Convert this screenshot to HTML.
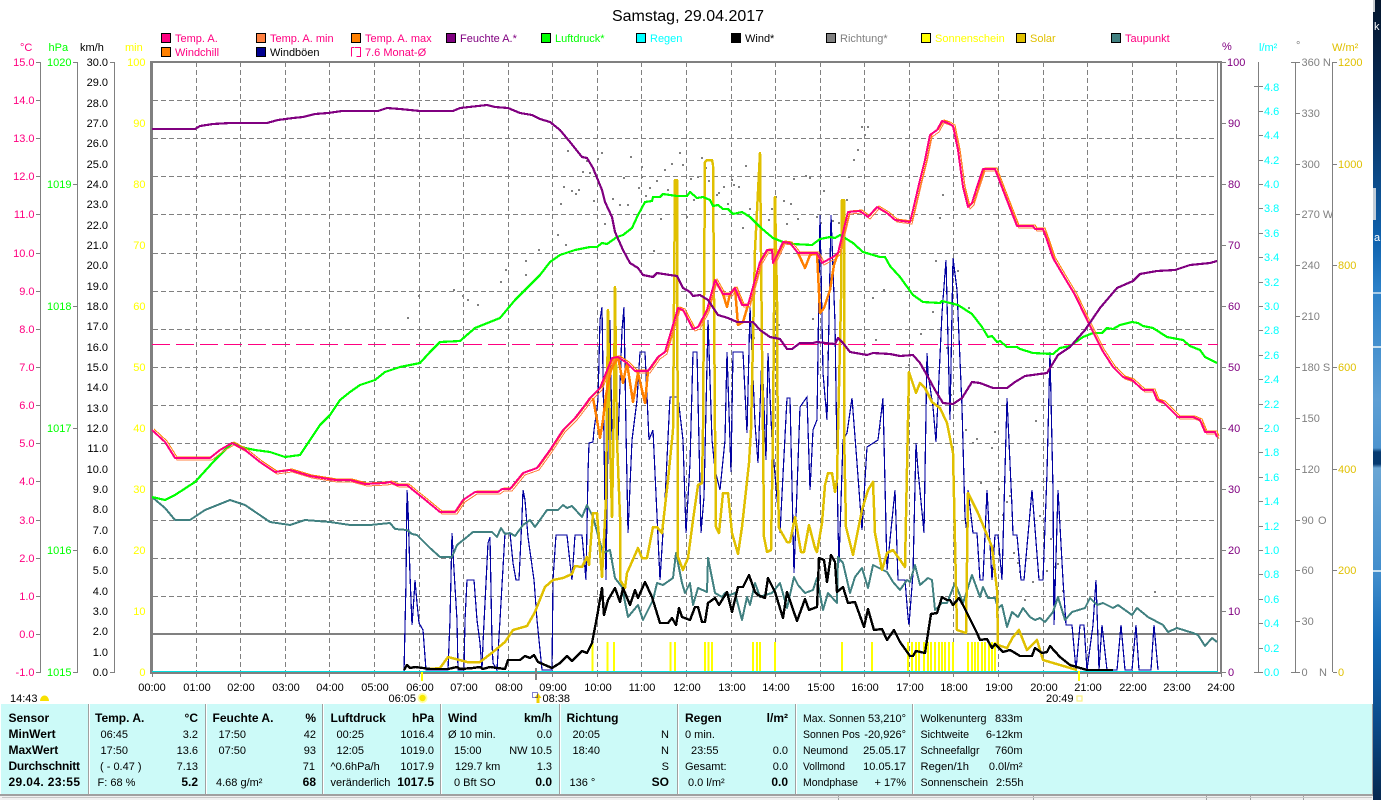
<!DOCTYPE html>
<html><head><meta charset="utf-8"><title>Samstag, 29.04.2017</title>
<style>
html,body{margin:0;padding:0;background:#fff;overflow:hidden}
svg{display:block;position:absolute;left:0;top:0}
text{font-family:"Liberation Sans",sans-serif;font-size:11px}
.b{font-weight:bold;font-size:12px}
.p text{fill:#000}
polyline,use{shape-rendering:crispEdges}
</style></head><body>
<svg width="1381" height="800" viewBox="0 0 1381 800" xmlns="http://www.w3.org/2000/svg">
<defs>
<linearGradient id="desk" x1="0" y1="0" x2="0" y2="1">
<stop offset="0" stop-color="#04152c"/><stop offset=".12" stop-color="#072a55"/><stop offset=".3" stop-color="#0f62ae"/><stop offset=".36" stop-color="#2a80c8"/><stop offset=".5" stop-color="#5e9fd4"/><stop offset=".56" stop-color="#4d94cf"/><stop offset=".565" stop-color="#063a70"/><stop offset=".58" stop-color="#063a70"/><stop offset=".585" stop-color="#6aa6d4"/><stop offset=".72" stop-color="#3f8ccc"/><stop offset=".8" stop-color="#136ab6"/><stop offset=".9" stop-color="#0a4c8c"/><stop offset="1" stop-color="#06284f"/>
</linearGradient>
<polyline id="temp" fill="none" stroke-linejoin="round" points="152,430 165,442 175,458 210,458 220,450 232,443 245,450 260,462 275,472 290,470 310,476 335,480 350,480 365,484 385,483 390,482 397,485 407,485 413,490 423,498 440,512 455,512 463,500 475,492 498,492 502,489 510,489 523,473 537,468 550,450 563,430 575,418 585,405 590,398 600,388 612,358 618,357 627,363 635,371 648,371 658,357 665,352 678,308 683,310 693,329 698,327 707,310 715,280 723,294 730,294 735,288 742,305 748,305 760,262 767,250 772,250 773,263 778,253 783,242 790,243 798,253 817,253 822,263 833,257 838,253 848,212 860,211 868,217 877,207 887,213 895,220 910,222 913,210 920,180 925,160 930,135 937,130 942,121 948,123 953,126 958,150 963,187 968,207 972,203 977,187 983,169 995,169 1003,190 1017,226 1033,226 1035,229 1043,229 1047,240 1053,258 1063,275 1075,295 1087,320 1102,350 1113,367 1123,377 1132,380 1143,390 1153,390 1157,400 1163,402 1178,417 1193,417 1200,420 1205,432 1215,432 1217,437"/>
</defs>
<rect width="1381" height="800" fill="#fff"/>

<text x="688" y="21" text-anchor="middle" style="font-size:16px" fill="#000">Samstag, 29.04.2017</text>

<!-- legend -->
<g stroke="#000" stroke-width="1" shape-rendering="crispEdges">
<rect x="161.500" y="33.500" width="9" height="9" fill="#ff0080"/>
<rect x="256.500" y="33.500" width="9" height="9" fill="#ff8040"/>
<rect x="351.500" y="33.500" width="9" height="9" fill="#ff8000"/>
<rect x="446.500" y="33.500" width="9" height="9" fill="#800080"/>
<rect x="541.500" y="33.500" width="9" height="9" fill="#00ff00"/>
<rect x="636.500" y="33.500" width="9" height="9" fill="#00ffff"/>
<rect x="731.500" y="33.500" width="9" height="9" fill="#000"/>
<rect x="826.500" y="33.500" width="9" height="9" fill="#808080"/>
<rect x="921.500" y="33.500" width="9" height="9" fill="#ffff00"/>
<rect x="1016.500" y="33.500" width="9" height="9" fill="#e0c000"/>
<rect x="1111.500" y="33.500" width="9" height="9" fill="#408080"/>
<rect x="161.500" y="47.500" width="9" height="9" fill="#ff8000"/>
<rect x="256.500" y="47.500" width="9" height="9" fill="#000090"/>
<path d="M355 47.500h5.500v9h-4M351.500 47.500h3M351.500 47.500v9" fill="none" stroke="#ff0080"/>
</g>
<g>
<text x="175" y="42" fill="#ff0080">Temp. A.</text>
<text x="270" y="42" fill="#ff0080">Temp. A. min</text>
<text x="365" y="42" fill="#ff0080">Temp. A. max</text>
<text x="460" y="42" fill="#800080">Feuchte A.*</text>
<text x="555" y="42" fill="#00ff00">Luftdruck*</text>
<text x="650" y="42" fill="#00ffff">Regen</text>
<text x="745" y="42" fill="#000">Wind*</text>
<text x="840" y="42" fill="#808080">Richtung*</text>
<text x="935" y="42" fill="#ffff00">Sonnenschein</text>
<text x="1030" y="42" fill="#e0c000">Solar</text>
<text x="1125" y="42" fill="#ff0080">Taupunkt</text>
<text x="175" y="56" fill="#ff0080">Windchill</text>
<text x="270" y="56" fill="#000">Windböen</text>
<text x="365" y="56" fill="#ff0080">7.6 Monat-Ø</text>
</g>

<!-- axis headings -->
<text x="20" y="51" fill="#ff0080">°C</text>
<text x="48.500" y="51" fill="#00ff00">hPa</text>
<text x="80" y="51" fill="#000">km/h</text>
<text x="125" y="51" fill="#ffff00">min</text>
<text x="1222" y="50" fill="#800080">%</text>
<text x="1259" y="51" fill="#00ffff">l/m²</text>
<text x="1296" y="49" fill="#808080">°</text>
<text x="1332" y="51" fill="#e0c000">W/m²</text>

<!-- grid -->
<g shape-rendering="crispEdges" fill="none">
<path stroke="#808080" stroke-dasharray="5 3" d="M196.500 62V672M240.500 62V672M285.500 62V672M329.500 62V672M374.500 62V672M419.500 62V672M463.500 62V672M508.500 62V672M552.500 62V672M597.500 62V672M641.500 62V672M686.500 62V672M731.500 62V672M775.500 62V672M820.500 62V672M864.500 62V672M909.500 62V672M953.500 62V672M998.500 62V672M1043.500 62V672M1087.500 62V672M1132.500 62V672M1176.500 62V672"/>
<path stroke="#808080" stroke-dasharray="5 3" d="M153 100.500H1218M153 138.500H1218M153 176.500H1218M153 214.500H1218M153 253.500H1218M153 291.500H1218M153 329.500H1218M153 367.500H1218M153 405.500H1218M153 443.500H1218M153 481.500H1218M153 520.500H1218M153 558.500H1218M153 596.500H1218"/>
<rect x="152" y="633" width="1066" height="2" fill="#808080"/>
<rect x="150" y="61" width="1072" height="2" fill="#808080"/>
<rect x="150" y="61" width="3" height="612" fill="#808080"/>
<rect x="1217" y="62" width="1" height="611" fill="#808080"/>
<rect x="1220" y="61" width="2" height="612" fill="#808080"/>
</g>

<!-- direction dots -->
<path fill="none" stroke="#808080" stroke-width="2" shape-rendering="crispEdges" d="M567 151h2M601 153h2M630 157h2M679 153h2M671 164h2M682 165h2M701 158h2M745 166h2M861 127h2M867 127h2M864 135h2M857 150h2M853 160h2M586 161h2M597 159h2M582 172h2M589 173h2M641 167h2M664 170h2M623 178h2M641 177h2M690 179h2M697 177h2M705 168h2M712 176h2M708 181h2M656 181h2M638 188h2M649 188h2M563 187h2M571 191h2M575 194h2M578 190h2M645 196h2M667 190h2M718 193h2M723 187h2M716 195h2M731 180h2M733 185h2M738 187h2M793 179h2M805 176h2M809 178h2M848 177h2M823 191h2M846 200h2M775 197h2M783 201h2M790 204h2M693 200h2M560 204h2M593 201h2M612 199h2M619 205h2M627 205h2M727 204h2M701 197h2M771 209h2M749 209h2M604 224h2M660 219h2M686 217h2M786 224h2M797 219h2M816 217h2M768 220h2M742 228h2M820 223h2M832 221h2M838 223h2M942 195h2M939 218h2M653 251h2M778 325h2M753 338h2M760 278h2M812 319h2M872 298h2M883 290h2M827 353h2M875 340h2M879 428h2M935 261h2M957 271h2M932 312h2M920 334h2M946 348h2M968 308h2M908 365h2M950 395h2M1035 421h2M965 430h2M994 432h2M976 439h2M972 443h2M991 448h2M916 461h2M980 483h2M998 489h2M1009 496h2M1006 502h2M1039 516h2M1002 515h2M1043 533h2M1050 539h2M1013 553h2M1017 563h2M1057 564h2M1046 571h2M1019 572h2M1054 567h2M1032 582h2M1062 591h2M1154 592h2M1024 600h2M407 318h2M453 290h2M462 296h2M477 305h2M500 282h2M505 270h2M525 275h2M538 250h2M557 235h2M565 245h2M525 261h2M467 300h2M418 296h2"/>

<!-- sunshine bars -->
<path fill="none" stroke="#ffff00" stroke-width="2" shape-rendering="crispEdges" d="M592.500 642V671M607.500 642V671M614 642V671M670.500 642V671M675 642V671M705 642V671M708.500 642V671M712 642V671M753 642V671M757 642V671M760 642V671M775 642V671M842 642V671M872 642V671M908 642V671M912 642V671M916 642V671M919 642V671M924 642V671M928 642V671M931 642V671M935 642V671M939 642V671M942 642V671M945 642V671M949 642V671M953 642V671M968 642V671M972 642V671M975 642V671M978 642V671M982 642V671M985 642V671M989 642V671M992 642V671M995 642V671"/>

<!-- Monat avg -->
<line x1="152" y1="344.500" x2="1218" y2="344.500" stroke="#ff0080" stroke-width="1" stroke-dasharray="18 6" shape-rendering="crispEdges"/>

<!-- wind gusts -->
<polyline fill="none" stroke="#0000a0" stroke-width="1.200" points="404,672 406,582 407,490 408,507 410,575 412,625 414,597 415,580 417,603 419,623 423,630 426,670 448,670 450,620 452,533 454,570 457,620 458,670 464,670 465,620 467,580 474,580 477,620 480,643 482,670 483,643 488,543 490,537 492,643 493,663 497,670 500,620 505,533 510,533 513,563 516,580 519,580 522,517 523,490 525,500 528,537 534,580 537,620 542,670 552,670 553,580 556,535 567,535 570,563 572,580 575,535 582,535 586,580 588,473 589,443 593,442 594,430 598,400 600,320 602,307 604,440 606,580 608,440 610,320 612,440 615,367 618,440 622,330 624,307 626,430 628,533 632,440 637,400 640,352 645,352 649,440 653,430 660,580 665,500 670,397 678,397 683,440 686,533 690,463 693,352 697,352 701,533 704,497 708,320 712,440 715,470 720,490 725,440 727,352 731,472 733,352 743,352 747,433 750,307 755,423 758,463 762,353 766,460 768,353 772,440 780,533 787,398 790,398 794,573 800,407 807,397 810,490 813,430 817,420 820,215 823,373 827,420 831,215 835,323 838,527 839,563 843,440 847,433 852,398 857,463 862,530 867,447 878,440 883,398 887,570 895,490 898,580 905,580 908,617 909,625 913,573 916,443 918,470 924,533 927,353 928,373 933,407 936,442 942,313 946,260 948,340 950,420 953,258 957,290 962,407 965,517 967,533 968,490 973,533 977,533 980,580 983,580 987,490 992,580 995,535 998,535 1002,580 1007,398 1012,507 1013,535 1017,535 1021,580 1024,580 1032,490 1039,580 1043,580 1047,473 1050,352 1053,490 1054,625 1058,490 1063,580 1066,625 1072,625 1076,670 1080,625 1084,625 1087,670 1093,625 1096,580 1099,670 1102,625 1107,670 1117,670 1121,625 1125,670 1132,670 1136,625 1139,670 1151,670 1154,625 1158,670"/>

<!-- dew point -->
<polyline fill="none" stroke="#408080" stroke-width="2" stroke-linejoin="round" points="152,497 165,508 175,520 190,520 205,510 230,500 245,505 270,522 290,525 305,520 330,522 350,525 370,525 390,523 395,529 407,530 412,534 417,535 430,548 440,557 452,557 457,545 467,537 473,532 492,532 497,537 501,528 505,534 510,533 515,536 523,525 530,520 535,527 547,510 558,510 563,505 567,508 572,506 582,517 587,505 593,517 603,553 610,550 615,578 622,587 628,617 638,605 643,620 653,600 657,583 663,585 673,578 676,553 682,583 685,593 690,583 693,605 698,588 707,592 708,558 715,593 722,597 725,593 730,595 735,593 742,620 747,597 750,605 755,583 760,597 765,595 772,593 780,583 787,608 794,577 798,585 805,593 813,590 817,578 823,610 828,593 837,603 838,557 843,563 850,593 855,577 862,568 868,588 873,565 887,572 893,582 900,590 907,580 910,582 915,565 920,585 928,578 932,580 935,610 942,603 947,603 955,583 963,603 972,575 980,597 983,587 988,598 995,598 998,608 1002,605 1007,627 1012,612 1018,617 1023,608 1030,617 1035,620 1040,618 1045,622 1053,612 1058,597 1065,620 1072,612 1085,608 1090,598 1097,605 1103,603 1113,608 1118,605 1132,615 1137,608 1148,617 1163,625 1168,632 1177,628 1193,633 1198,635 1205,646 1212,638 1217,642"/>

<!-- solar -->
<polyline fill="none" stroke="#e0c000" stroke-width="2.500" stroke-linejoin="round" points="430,669 440,668 448,657 467,662 480,662 493,652 505,642 513,630 527,626 535,612 545,587 553,580 563,578 572,574 575,566 582,567 587,557 589,565 593,513 597,513 602,577 606,500 608,310 610,440 612,517 614,400 615,287 617,440 620,517 620,580 625,588 627,573 638,548 642,558 647,558 653,527 657,527 662,533 668,480 673,430 675,180 677,180 678,557 683,570 688,558 693,520 698,485 702,483 703,430 705,162 707,160 712,160 713,165 715,430 716,527 719,533 723,493 728,493 732,533 738,554 742,527 749,463 751,430 755,250 760,153 762,350 763,430 764,537 767,552 771,550 773,430 775,197 777,300 778,490 779,528 787,542 790,542 795,517 801,552 804,552 809,525 815,548 817,552 822,523 825,485 828,473 832,473 835,492 837,480 838,430 841,300 842,200 844,200 844,430 846,527 853,555 862,510 868,490 873,482 875,533 882,570 887,553 893,550 905,567 906,517 909,372 916,393 920,383 925,388 932,402 940,408 947,423 953,453 954,497 957,630 966,633 968,493 978,513 992,547 997,590 998,645 1007,648 1013,637 1019,630 1027,650 1037,640 1043,660 1060,665 1077,670"/>

<!-- pressure -->
<polyline fill="none" stroke="#00ff00" stroke-width="2.200" stroke-linejoin="round" points="152,497 165,500 175,495 195,482 215,460 232,443 245,448 255,450 270,452 285,457 300,455 310,440 320,425 330,415 340,400 350,392 360,385 375,380 385,372 400,367 420,363 430,352 440,342 460,341 475,328 490,322 500,318 515,300 525,290 540,275 550,262 560,255 575,250 590,247 597,247 602,243 607,244 617,237 623,235 632,228 638,215 645,202 652,201 653,197 660,197 663,194 677,196 687,196 690,192 697,198 703,197 710,200 713,206 718,205 723,209 728,209 733,214 742,212 750,217 760,227 767,233 773,238 783,242 793,244 812,245 820,239 830,237 835,238 840,235 853,243 863,252 880,257 885,257 890,266 900,277 913,295 923,302 940,303 942,301 958,305 972,314 982,327 988,337 992,336 997,342 1000,341 1007,347 1017,347 1020,349 1033,353 1053,354 1060,348 1070,346 1083,337 1093,333 1102,333 1107,328 1113,329 1120,325 1132,322 1138,323 1143,326 1153,328 1167,337 1183,340 1190,346 1200,350 1205,357 1217,363"/>

<!-- temp variants -->
<use href="#temp" transform="translate(2,-1)" stroke="#ff8000" stroke-width="1"/>
<use href="#temp" transform="translate(2,2)" stroke="#ff8040" stroke-width="1"/>
<!-- windchill -->
<polyline fill="none" stroke="#ff8000" stroke-width="2.500" stroke-linejoin="round" points="593,398 597,420 600,438 603,420 606,395 611,370 618,357 623,383 627,363 633,402 638,373 645,403 648,371"/>
<polyline fill="none" stroke="#ff8000" stroke-width="2.500" stroke-linejoin="round" points="715,280 723,294 727,307 730,294 735,288 738,325 743,322 748,305"/>
<polyline fill="none" stroke="#ff8000" stroke-width="2.500" stroke-linejoin="round" points="798,253 805,268 810,255 817,253 820,313 824,308 830,290 834,265 838,253"/>
<use href="#temp" stroke="#ff0080" stroke-width="2"/>

<!-- humidity -->
<polyline fill="none" stroke="#800080" stroke-width="2.200" stroke-linejoin="round" points="152,129 195,129 200,126 213,124 230,123 267,123 278,120 293,118 303,117 315,114 328,113 342,111 378,111 387,108 400,109 420,111 453,111 460,108 487,105 495,107 508,108 520,113 532,115 540,119 550,122 560,130 570,142 582,157 587,158 593,168 602,190 605,202 612,217 615,232 623,250 630,263 638,268 643,275 653,277 657,273 670,275 677,276 683,288 690,292 693,296 700,295 708,300 718,315 728,318 737,322 753,322 760,330 770,337 780,339 787,349 792,349 800,343 813,343 817,342 835,344 838,338 843,343 850,352 867,355 873,353 890,354 900,356 913,355 920,363 928,377 935,390 943,403 953,404 962,398 972,382 980,383 993,388 1007,388 1015,382 1025,376 1047,373 1058,355 1070,347 1085,330 1100,308 1117,288 1133,281 1140,274 1157,271 1175,270 1190,265 1210,263 1217,261"/>

<!-- wind -->
<polyline fill="none" stroke="#000" stroke-width="2.400" stroke-linejoin="round" points="404,670 407,665 410,668 415,667 423,668 430,669 448,669 457,667 460,669 473,668 480,667 483,669 490,667 505,669 508,660 520,660 525,656 530,658 534,655 538,662 552,668 560,663 567,656 572,661 582,651 587,653 592,643 597,617 602,588 604,615 608,600 615,588 620,602 623,588 630,605 635,590 638,598 645,582 652,597 660,623 668,623 672,618 676,625 679,608 682,617 690,620 695,607 698,607 702,622 705,622 708,603 715,598 719,605 727,592 732,612 738,587 743,587 749,575 755,592 758,595 765,598 768,578 775,592 783,618 787,592 797,621 805,599 809,610 817,607 819,558 824,560 827,582 831,555 835,562 837,592 843,587 848,603 855,602 864,627 868,609 874,630 882,629 887,640 894,630 900,642 910,656 913,656 916,651 925,653 931,614 937,613 942,597 947,600 950,600 953,605 959,598 963,605 977,633 980,640 987,639 992,648 995,644 1003,652 1010,650 1020,656 1032,656 1035,648 1042,653 1047,652 1050,646 1060,657 1070,665 1087,670 1113,670"/>

<!-- bottom axis -->
<g shape-rendering="crispEdges" fill="none">
<rect x="152" y="671" width="1066" height="1" fill="#00e0e0"/>
<rect x="150" y="672" width="1072" height="2" fill="#808080"/>
<path stroke="#808080" d="M152.500 673V677M196.500 673V677M240.500 673V677M285.500 673V677M329.500 673V677M374.500 673V677M419.500 673V677M463.500 673V677M508.500 673V677M552.500 673V677M597.500 673V677M641.500 673V677M686.500 673V677M731.500 673V677M775.500 673V677M820.500 673V677M864.500 673V677M909.500 673V677M953.500 673V677M998.500 673V677M1043.500 673V677M1087.500 673V677M1132.500 673V677M1176.500 673V677M1221.500 673V677"/>
<rect x="421" y="672" width="2" height="9" fill="#ffff00"/>
<rect x="535" y="668" width="2" height="12" fill="#808080"/>
<rect x="1078" y="671" width="2" height="10" fill="#ffff00"/>
</g>
<g text-anchor="middle" fill="#000">
<text x="152" y="691">00:00</text><text x="197" y="691">01:00</text><text x="241" y="691">02:00</text><text x="286" y="691">03:00</text><text x="330" y="691">04:00</text><text x="375" y="691">05:00</text><text x="420" y="691">06:00</text><text x="464" y="691">07:00</text><text x="509" y="691">08:00</text><text x="553" y="691">09:00</text><text x="598" y="691">10:00</text><text x="642" y="691">11:00</text><text x="687" y="691">12:00</text><text x="732" y="691">13:00</text><text x="776" y="691">14:00</text><text x="821" y="691">15:00</text><text x="865" y="691">16:00</text><text x="910" y="691">17:00</text><text x="954" y="691">18:00</text><text x="999" y="691">19:00</text><text x="1044" y="691">20:00</text><text x="1088" y="691">21:00</text><text x="1133" y="691">22:00</text><text x="1177" y="691">23:00</text><text x="1221" y="691">24:00</text>
</g>
<!-- sun markers -->
<g fill="#000">
<text x="10" y="702">14:43</text>
<text x="388.500" y="702">06:05</text>
<text x="542.500" y="702">08:38</text>
<text x="1046" y="702">20:49</text>
</g>
<path d="M40 701a4.500 5.500 0 0 1 9 0z" fill="#f8e000"/>
<circle cx="422.500" cy="698" r="5" fill="#ffffa0"/><circle cx="422.500" cy="698" r="3.200" fill="#f8e800"/>
<path d="M538 693l3.500 5h-2v5h-3v-5h-2z" fill="#f0d000"/>
<rect x="532.500" y="692.500" width="5" height="5" fill="none" stroke="#0000a0" stroke-dasharray="1 1" shape-rendering="crispEdges"/>
<rect x="1077" y="696" width="5" height="5" fill="none" stroke="#f8f080" stroke-width="1.200"/>

<!-- scale lines -->
<g shape-rendering="crispEdges" fill="none" stroke="#808080">
<path d="M40.500 62V672M36 62.500H41M36 100.500H41M36 138.500H41M36 176.500H41M36 214.500H41M36 253.500H41M36 291.500H41M36 329.500H41M36 367.500H41M36 405.500H41M36 443.500H41M36 481.500H41M36 520.500H41M36 558.500H41M36 596.500H41M36 634.500H41M36 672.500H41"/>
<path d="M77.500 62V672M73 62.500H78M73 184.500H78M73 306.500H78M73 428.500H78M73 550.500H78M73 672.500H78"/>
<path d="M114.500 62V672M110 62.500H115M110 672.500H115"/>
<path d="M1226 62.500H1222M1226 123.500H1222M1226 184.500H1222M1226 245.500H1222M1226 306.500H1222M1226 367.500H1222M1226 428.500H1222M1226 489.500H1222M1226 550.500H1222M1226 611.500H1222M1226 672.500H1222"/>
<path d="M1258.500 62V672M1254 86.500H1263M1259 111.500H1263M1259 135.500H1263M1259 160.500H1263M1259 184.500H1263M1259 208.500H1263M1259 233.500H1263M1259 257.500H1263M1259 282.500H1263M1259 306.500H1263M1259 330.500H1263M1259 355.500H1263M1259 379.500H1263M1259 404.500H1263M1259 428.500H1263M1259 452.500H1263M1259 477.500H1263M1259 501.500H1263M1259 526.500H1263M1259 550.500H1263M1259 574.500H1263M1259 599.500H1263M1259 623.500H1263M1259 648.500H1263M1254 672.500H1263"/>
<path d="M1295.500 62V672M1291 62.500H1300M1296 113.500H1300M1296 164.500H1300M1296 214.500H1300M1296 265.500H1300M1296 316.500H1300M1296 367.500H1300M1296 418.500H1300M1296 469.500H1300M1296 520.500H1300M1296 570.500H1300M1296 621.500H1300M1291 672.500H1300"/>
<path d="M1332.500 62V672M1333 62.500H1337M1333 164.500H1337M1333 265.500H1337M1333 367.500H1337M1333 469.500H1337M1333 570.500H1337M1333 672.500H1337"/>
</g>
<g text-anchor="end" fill="#ff0080">
<text x="34.500" y="66">15.0</text><text x="34.500" y="104">14.0</text><text x="34.500" y="142">13.0</text><text x="34.500" y="180">12.0</text><text x="34.500" y="218">11.0</text><text x="34.500" y="257">10.0</text><text x="34.500" y="295">9.0</text><text x="34.500" y="333">8.0</text><text x="34.500" y="371">7.0</text><text x="34.500" y="409">6.0</text><text x="34.500" y="447">5.0</text><text x="34.500" y="485">4.0</text><text x="34.500" y="524">3.0</text><text x="34.500" y="562">2.0</text><text x="34.500" y="600">1.0</text><text x="34.500" y="638">0.0</text><text x="34.500" y="676">-1.0</text>
</g>
<g text-anchor="end" fill="#00ff00">
<text x="71.500" y="66">1020</text><text x="71.500" y="188">1019</text><text x="71.500" y="310">1018</text><text x="71.500" y="432">1017</text><text x="71.500" y="554">1016</text><text x="71.500" y="676">1015</text>
</g>
<g text-anchor="end" fill="#000">
<text x="108" y="66">30.0</text><text x="108" y="86">29.0</text><text x="108" y="107">28.0</text><text x="108" y="127">27.0</text><text x="108" y="147">26.0</text><text x="108" y="168">25.0</text><text x="108" y="188">24.0</text><text x="108" y="208">23.0</text><text x="108" y="229">22.0</text><text x="108" y="249">21.0</text><text x="108" y="269">20.0</text><text x="108" y="290">19.0</text><text x="108" y="310">18.0</text><text x="108" y="330">17.0</text><text x="108" y="351">16.0</text><text x="108" y="371">15.0</text><text x="108" y="391">14.0</text><text x="108" y="412">13.0</text><text x="108" y="432">12.0</text><text x="108" y="452">11.0</text><text x="108" y="473">10.0</text><text x="108" y="493">9.0</text><text x="108" y="513">8.0</text><text x="108" y="534">7.0</text><text x="108" y="554">6.0</text><text x="108" y="574">5.0</text><text x="108" y="595">4.0</text><text x="108" y="615">3.0</text><text x="108" y="635">2.0</text><text x="108" y="656">1.0</text><text x="108" y="676">0.0</text>
</g>
<g text-anchor="end" fill="#ffff00">
<text x="145.500" y="66">100</text><text x="145.500" y="127">90</text><text x="145.500" y="188">80</text><text x="145.500" y="249">70</text><text x="145.500" y="310">60</text><text x="145.500" y="371">50</text><text x="145.500" y="432">40</text><text x="145.500" y="493">30</text><text x="145.500" y="554">20</text><text x="145.500" y="615">10</text><text x="145.500" y="676">0</text>
</g>

<!-- right scales -->
<g fill="#800080">
<text x="1227" y="66">100</text><text x="1228" y="127">90</text><text x="1228" y="188">80</text><text x="1228" y="249">70</text><text x="1228" y="310">60</text><text x="1228" y="371">50</text><text x="1228" y="432">40</text><text x="1228" y="493">30</text><text x="1228" y="554">20</text><text x="1228" y="615">10</text><text x="1228" y="676">0</text>
</g>
<g fill="#00ffff">
<text x="1264" y="91">4.8</text><text x="1264" y="115">4.6</text><text x="1264" y="139">4.4</text><text x="1264" y="164">4.2</text><text x="1264" y="188">4.0</text><text x="1264" y="212">3.8</text><text x="1264" y="237">3.6</text><text x="1264" y="261">3.4</text><text x="1264" y="286">3.2</text><text x="1264" y="310">3.0</text><text x="1264" y="334">2.8</text><text x="1264" y="359">2.6</text><text x="1264" y="383">2.4</text><text x="1264" y="408">2.2</text><text x="1264" y="432">2.0</text><text x="1264" y="456">1.8</text><text x="1264" y="481">1.6</text><text x="1264" y="505">1.4</text><text x="1264" y="530">1.2</text><text x="1264" y="554">1.0</text><text x="1264" y="578">0.8</text><text x="1264" y="603">0.6</text><text x="1264" y="627">0.4</text><text x="1264" y="652">0.2</text><text x="1264" y="676">0.0</text>
</g>
<g fill="#808080">
<text x="1301.500" y="66">360 N</text><text x="1301.500" y="117">330</text><text x="1301.500" y="168">300</text><text x="1301.500" y="218">270 W</text><text x="1301.500" y="269">240</text><text x="1301.500" y="320">210</text><text x="1301.500" y="371">180 S</text><text x="1301.500" y="422">150</text><text x="1301.500" y="473">120</text><text x="1301.500" y="524">90</text><text x="1318" y="524">O</text><text x="1301.500" y="574">60</text><text x="1301.500" y="625">30</text><text x="1301.500" y="676">0</text><text x="1319" y="676">N</text>
</g>
<g fill="#e0c000">
<text x="1338" y="66">1200</text><text x="1338" y="168">1000</text><text x="1338" y="269">800</text><text x="1338" y="371">600</text><text x="1338" y="473">400</text><text x="1338" y="574">200</text><text x="1338" y="676">0</text>
</g>

<!-- desktop sliver -->
<rect x="1373" y="0" width="8" height="800" fill="url(#desk)"/>
<rect x="1373" y="0" width="2" height="12" fill="#c8ccd0"/>
<rect x="1373" y="188" width="3" height="32" fill="#c0ccd8"/>
<rect x="1373" y="292" width="8" height="2" fill="#a8cce8"/>
<rect x="1373" y="346" width="8" height="2" fill="#c8e0f0"/>
<rect x="1373" y="570" width="8" height="2" fill="#c8e0f0"/>
<text x="1374" y="30" fill="#fff">k</text>
<text x="1374" y="241" fill="#fff">a</text>

<!-- panel -->
<rect x="1" y="704" width="1371" height="90" fill="#ccfaf8"/>
<rect x="1372" y="704" width="1" height="92" fill="#a0a0a0"/>
<g shape-rendering="crispEdges" fill="#a0a0a0">
<rect x="88" y="704" width="1" height="90"/><rect x="205" y="704" width="1" height="90"/><rect x="322" y="704" width="1" height="90"/><rect x="440" y="704" width="1" height="90"/><rect x="559" y="704" width="1" height="90"/><rect x="677" y="704" width="1" height="90"/><rect x="795" y="704" width="1" height="90"/><rect x="912" y="704" width="1" height="90"/>
</g>
<g shape-rendering="crispEdges" fill="#fff">
<rect x="89" y="704" width="1" height="90"/><rect x="206" y="704" width="1" height="90"/><rect x="323" y="704" width="1" height="90"/><rect x="441" y="704" width="1" height="90"/><rect x="560" y="704" width="1" height="90"/><rect x="678" y="704" width="1" height="90"/><rect x="796" y="704" width="1" height="90"/><rect x="913" y="704" width="1" height="90"/>
</g>
<rect x="0" y="794" width="1373" height="2" fill="#a0a0a0"/>
<rect x="0" y="796" width="1373" height="4" fill="#f0f0f0"/>
<path d="M838.500 796V800M1033.500 796V800M1206.500 796V800M1250.500 796V800M1303.500 796V800" stroke="#a0a0a0" shape-rendering="crispEdges"/>
<rect x="2" y="797" width="1370" height="1" fill="#c8c8c8"/>

<g class="p">
<text class="b" x="8.500" y="722">Sensor</text><text class="b" x="8.500" y="738">MinWert</text><text class="b" x="8.500" y="754">MaxWert</text><text class="b" x="8.500" y="770" textLength="71.500" lengthAdjust="spacing">Durchschnitt</text><text class="b" x="8.500" y="786" textLength="71.500" lengthAdjust="spacing">29.04. 23:55</text>

<text class="b" x="95" y="722">Temp. A.</text><text class="b" x="198" y="722" text-anchor="end">°C</text>
<text x="100.500" y="738">06:45</text><text x="198" y="738" text-anchor="end">3.2</text>
<text x="100.500" y="754">17:50</text><text x="198" y="754" text-anchor="end">13.6</text>
<text x="100" y="770">( - 0.47 )</text><text x="198" y="770" text-anchor="end">7.13</text>
<text x="97.500" y="786">F: 68 %</text><text class="b" x="198" y="786" text-anchor="end">5.2</text>

<text class="b" x="212.500" y="722">Feuchte A.</text><text class="b" x="316" y="722" text-anchor="end">%</text>
<text x="218.500" y="738">17:50</text><text x="316" y="738" text-anchor="end">42</text>
<text x="218.500" y="754">07:50</text><text x="316" y="754" text-anchor="end">93</text>
<text x="315" y="770" text-anchor="end">71</text>
<text x="216" y="786">4.68 g/m²</text><text class="b" x="316" y="786" text-anchor="end">68</text>

<text class="b" x="330.500" y="722">Luftdruck</text><text class="b" x="434" y="722" text-anchor="end">hPa</text>
<text x="336.500" y="738">00:25</text><text x="434" y="738" text-anchor="end">1016.4</text>
<text x="336.500" y="754">12:05</text><text x="434" y="754" text-anchor="end">1019.0</text>
<text x="330.500" y="770">^0.6hPa/h</text><text x="434" y="770" text-anchor="end">1017.9</text>
<text x="330.500" y="786">veränderlich</text><text class="b" x="434" y="786" text-anchor="end">1017.5</text>

<text class="b" x="448" y="722">Wind</text><text class="b" x="552" y="722" text-anchor="end">km/h</text>
<text x="448" y="738">Ø 10 min.</text><text x="552" y="738" text-anchor="end">0.0</text>
<text x="454" y="754">15:00</text><text x="552" y="754" text-anchor="end">NW 10.5</text>
<text x="455" y="770">129.7 km</text><text x="552" y="770" text-anchor="end">1.3</text>
<text x="454" y="786">0 Bft SO</text><text class="b" x="552" y="786" text-anchor="end">0.0</text>

<text class="b" x="566.500" y="722">Richtung</text>
<text x="572.500" y="738">20:05</text><text x="669" y="738" text-anchor="end">N</text>
<text x="572.500" y="754">18:40</text><text x="669" y="754" text-anchor="end">N</text>
<text x="669" y="770" text-anchor="end">S</text>
<text x="569.500" y="786">136 °</text><text class="b" x="669" y="786" text-anchor="end">SO</text>

<text class="b" x="685" y="722">Regen</text><text class="b" x="788" y="722" text-anchor="end">l/m²</text>
<text x="685" y="738">0 min.</text>
<text x="691" y="754">23:55</text><text x="788" y="754" text-anchor="end">0.0</text>
<text x="685" y="770">Gesamt:</text><text x="788" y="770" text-anchor="end">0.0</text>
<text x="688" y="786">0.0 l/m²</text><text class="b" x="788" y="786" text-anchor="end">0.0</text>

<text x="803" y="722" textLength="62" lengthAdjust="spacingAndGlyphs">Max. Sonnen</text><text x="906" y="722" text-anchor="end">53,210°</text>
<text x="803" y="738" textLength="57" lengthAdjust="spacingAndGlyphs">Sonnen Pos</text><text x="906" y="738" text-anchor="end">-20,926°</text>
<text x="803" y="754" textLength="45" lengthAdjust="spacingAndGlyphs">Neumond</text><text x="906" y="754" text-anchor="end">25.05.17</text>
<text x="803" y="770" textLength="42" lengthAdjust="spacingAndGlyphs">Vollmond</text><text x="906" y="770" text-anchor="end">10.05.17</text>
<text x="803" y="786" textLength="55" lengthAdjust="spacingAndGlyphs">Mondphase</text><text x="906" y="786" text-anchor="end">+ 17%</text>

<text x="920.500" y="722" textLength="66" lengthAdjust="spacingAndGlyphs">Wolkenunterg</text><text x="1022.500" y="722" text-anchor="end">833m</text>
<text x="920.500" y="738" textLength="48.500" lengthAdjust="spacingAndGlyphs">Sichtweite</text><text x="1022.500" y="738" text-anchor="end">6-12km</text>
<text x="920.500" y="754" textLength="59" lengthAdjust="spacingAndGlyphs">Schneefallgr</text><text x="1022.500" y="754" text-anchor="end">760m</text>
<text x="920.500" y="770" textLength="48.500" lengthAdjust="spacingAndGlyphs">Regen/1h</text><text x="1022.500" y="770" text-anchor="end">0.0l/m²</text>
<text x="920.500" y="786" textLength="67.500" lengthAdjust="spacingAndGlyphs">Sonnenschein</text><text x="1023.500" y="786" text-anchor="end">2:55h</text>
</g>
</svg>
</body></html>
